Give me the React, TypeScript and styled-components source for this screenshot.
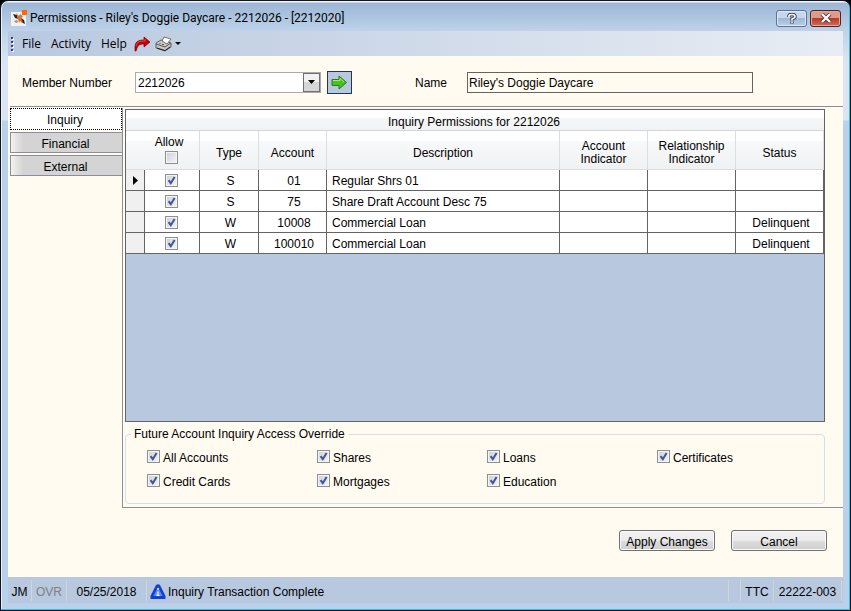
import React, { useState } from "react";
import styled, { createGlobalStyle } from "styled-components";

const sans = '"Liberation Sans", Arial, sans-serif';
const chrome = '"Open Sans", "Noto Sans", sans-serif';
const cream = "#fffbf0";
const slate = "#b8c8df";
const line = "#8c8d99";
const gridLine = "#646464";

const GlobalStyle = createGlobalStyle`
  * { box-sizing: border-box; }
  body { margin: 0; background: #000; }
  button, input, select { font: inherit; color: inherit; margin: 0; }
`;

const Window = styled.div`
  min-height: 100vh;
  display: flex;
  flex-direction: column;
  padding: 0 7px 7px;
  border: 1px solid #14141c;
  border-radius: 8px 8px 0 0;
  background: linear-gradient(#f4f8fc 0 1px, #9cb6d5 2px, #bed3ea 30px, #d9e5f2 60px, #d9e5f2 119px, #b9d1ea 120px);
  box-shadow: inset -1px -1px #2ec4e0, inset 1px 0 #e8f1fa;
  font: 12px/16px ${sans};
  color: #000;
`;

const TitleBar = styled.header`
  display: flex;
  align-items: center;
  height: 30px;
  padding: 4px 2px 0 3px;
  gap: 3px;
`;

const Title = styled.h1`
  flex: 1;
  margin: 0;
  font: 400 12px/16px Roboto, ${chrome};
  white-space: nowrap;
`;

const CaptionButton = styled.button<{ $close?: boolean }>`
  display: flex;
  align-items: center;
  justify-content: center;
  width: 31px;
  height: 17px;
  padding: 0;
  border: 1px solid ${(p) => (p.$close ? "#5a1f1c" : "#5f7390")};
  border-radius: 3px;
  box-shadow: inset 0 0 0 1px ${(p) => (p.$close ? "#e3a79d" : "#dfe9f5")};
  background: ${(p) =>
    p.$close
      ? "linear-gradient(#dc9a8f 0 45%, #b8392b 50%, #cf6f56)"
      : "linear-gradient(#c5d7ec 0 45%, #9fb8d6 50%, #b9cfe8)"};
`;

const MenuBar = styled.nav`
  display: flex;
  align-items: center;
  height: 25px;
  padding-left: 1px;
  background: linear-gradient(90deg, #b8c8df, #e8edf4);
  font: 12px/16px ${chrome};
`;

const MenuButton = styled.button`
  padding: 0 5px;
  border: 0;
  background: none;
  font-size: 12px;
`;

const IconButton = styled.button`
  display: flex;
  align-items: center;
  padding: 0 2px;
  border: 0;
  background: none;
`;

const Body = styled.main`
  flex: 1;
  display: flex;
  flex-direction: column;
  background: ${cream};
`;

const MemberBar = styled.form`
  display: flex;
  align-items: center;
  height: 51px;
  margin-left: 2px;
  padding: 2px 90px 0 12px;
  border-bottom: 1px solid ${line};
`;

const FieldLabel = styled.label<{ $width: number }>`
  width: ${(p) => p.$width}px;
  padding-top: 2px;
  flex: none;
`;

const Combo = styled.span`
  display: grid;
  width: 186px;
  > * { grid-area: 1 / 1; }
`;

const ComboSelect = styled.select`
  appearance: none;
  height: 21px;
  padding: 2px 20px 0 2px;
  border: 1px solid #a9a9b2;
  border-radius: 0;
  background: #fff;
`;

const ComboArrow = styled.span`
  display: flex;
  align-items: center;
  justify-content: center;
  justify-self: end;
  width: 17px;
  height: 19px;
  margin: 1px;
  border: 1px solid #707070;
  background: linear-gradient(#f2f2f2 50%, #d6d6d6 50%);
  pointer-events: none;
`;

const GoButton = styled.button`
  display: flex;
  align-items: center;
  justify-content: center;
  width: 25px;
  height: 23px;
  margin: 0 63px 0 6px;
  padding: 0;
  border: 1px solid #26344f;
  background: ${slate};
`;

const NameInput = styled.input`
  flex: 1;
  min-width: 0;
  height: 21px;
  padding: 2px 1px 0;
  border: 1px solid #646464;
  background: ${cream};
`;

const Content = styled.div`
  flex: 1;
  display: flex;
  padding: 1px 0 0 2px;
`;

const TabList = styled.div`
  width: 112px;
  flex: none;
  display: flex;
  flex-direction: column;
`;

const Tab = styled.button<{ $active?: boolean }>`
  height: ${(p) => (p.$active ? 22 : 21)}px;
  margin-bottom: 2px;
  padding: 2px 2px 0 0;
  border: 1px solid ${line};
  border-width: ${(p) => (p.$active ? "1px" : "1px 0 1px 1px")};
  border-style: ${(p) => (p.$active ? "dotted" : "solid")};
  border-color: ${(p) => (p.$active ? "#000" : line)};
  background: ${(p) => (p.$active ? "#fff" : "linear-gradient(90deg, #f4f2ee, #d4d4d4 12px)")};
`;

const Panel = styled.section`
  flex: 1;
  min-width: 0;
  align-self: flex-start;
  display: flex;
  flex-direction: column;
  height: 400px;
  padding: 1px 18px 3px 2px;
  border: 1px solid ${line};
  border-width: 0 0 1px 1px;
`;

const GridBox = styled.div`
  flex: 1;
  border: 1px solid ${gridLine};
  background: ${slate};
`;

const Table = styled.table`
  width: 100%;
  table-layout: fixed;
  border-collapse: separate;
  border-spacing: 0;
  background: #fff;

  caption {
    height: 21px;
    padding: 4px 2px 0 0;
    line-height: 16px;
    border-bottom: 1px solid #d5d5d8;
    background: linear-gradient(#fff 8px, #f5f6f7 8px, #f1f2f4);
  }
`;

const HeadCell = styled.th<{ $top?: boolean }>`
  height: 39px;
  padding: ${(p) => (p.$top ? 5 : 6)}px 0 0;
  border: 1px solid #dcdde0;
  border-width: 0 1px 1px 0;
  background: linear-gradient(#fff 10px, #f8f9fa 10px, #f0f1f3);
  font-weight: 400;
  line-height: 13px;
  vertical-align: ${(p) => (p.$top ? "top" : "middle")};
  &:first-child { border-right-color: transparent; }
`;

const AllowHead = styled.label`
  display: flex;
  flex-direction: column;
  align-items: center;
  gap: 2px;
  padding-right: 1px;
  span { padding-right: 5px; }
`;

const Cell = styled.td<{ $align?: "left" | "center" }>`
  height: 21px;
  padding: ${(p) => (p.$align === "left" ? "1px 0 0 5px" : "1px 0 0 3px")};
  border: 1px solid ${gridLine};
  border-width: 0 1px 1px 0;
  line-height: 16px;
  text-align: ${(p) => p.$align ?? "center"};
`;

const RowHead = styled(Cell)`
  padding: 1px 0 0 7px;
  background: #f0f0f0;
`;

const TickCell = styled(Cell)`
  padding: 0 1px 0 0;
`;

const Tick = styled.input.attrs({ type: "checkbox" })`
  appearance: none;
  display: block;
  flex: none;
  width: 13px;
  height: 13px;
  border: 1px solid #8e8f8f;
  box-shadow: inset 0 0 0 1px #f4f4f4;
  background: linear-gradient(135deg, #cbcfd5, #f6f6f6);
  &:checked {
    background: url("data:image/svg+xml,%3Csvg xmlns='http://www.w3.org/2000/svg' width='11' height='11'%3E%3Cpath d='M2.6 5.2 4.8 8.2 8.6 2' fill='none' stroke='%2340559a' stroke-width='2'/%3E%3C/svg%3E"),
      linear-gradient(135deg, #cbcfd5, #f6f6f6);
  }
  ${TickCell} & { margin: 0 auto; }
`;

const Override = styled.fieldset`
  height: 78px;
  min-width: 0;
  margin: 4px 0 0;
  padding: 0 0 0 21px;
  border: 1px solid #d5dfe9;
  border-radius: 4px;
  legend {
    margin-left: -16px;
    padding: 0 3px;
    line-height: 16px;
  }
`;

const Options = styled.div`
  display: grid;
  grid-template-columns: repeat(4, 170px);
  row-gap: 8px;
  padding-top: 8px;
`;

const Option = styled.label`
  display: flex;
  gap: 3px;
  line-height: 16px;
`;

const Actions = styled.div`
  display: flex;
  justify-content: flex-end;
  gap: 16px;
  padding: 0 16px 26px;
`;

const ActionButton = styled.button`
  width: 96px;
  height: 21px;
  padding: 2px 0 0;
  border: 1px solid #707070;
  border-radius: 3px;
  box-shadow: inset 0 0 0 1px #fafafa;
  background: linear-gradient(#f2f2f2, #ebebeb 50%, #dddddd 50%, #cfcfcf);
  white-space: nowrap;
`;

const StatusBar = styled.footer`
  display: flex;
  align-items: center;
  height: 26px;
  padding: 0 1px 0 0;
  background: ${slate};
`;

const StatusItem = styled.span<{ $width?: number; $muted?: boolean }>`
  display: flex;
  align-items: center;
  justify-content: center;
  width: ${(p) => (p.$width ? `${p.$width}px` : "auto")};
  height: 21px;
  padding-top: 3px;
  border-right: 1px solid #d4d6d6;
  color: ${(p) => (p.$muted ? "#808080" : "#000")};
`;

const StatusMessage = styled(StatusItem)`
  flex: 1;
  justify-content: flex-start;
  gap: 2px;
  padding-left: 3px;
`;

const AppIcon = () => (
  <svg width="16" height="16" viewBox="0 0 16 16">
    <rect x="0" y="2" width="15" height="14" fill="#f3f2f0" />
    <path d="M2 4 6 5 7 9 4 8ZM10 8 13 10 14 14 10 12Z" fill="#26282c" />
    <path d="M3 11 6 10 7 12 5 13ZM9 4 12 6 11 8 9 7Z" fill="#8b929a" />
    <path d="M5 3 8 6 9 4 10 8 12 13 9 11 8 13 7 9Z" fill="#e96a1a" />
    <rect x="11" y="0" width="5" height="5" fill="#ff6a00" />
  </svg>
);

const Grip = () => (
  <svg width="8" height="16" viewBox="0 0 8 16">
    {[1, 5, 9, 13].map((y) => (
      <g key={y}>
        <rect x="3" y={y + 1} width="2" height="2" fill="#fff" />
        <rect x="2" y={y} width="2" height="2" fill="#27457f" />
      </g>
    ))}
  </svg>
);

const RedArrow = () => (
  <svg width="17" height="16" viewBox="0 0 17 16">
    <path d="M1 15V11C1 6 4 4 10 4V1L16 6 10 11V8C6 8 4 9 3 12L2 15Z" fill="#c4000a" stroke="#7a0004" strokeWidth=".7" />
    <path d="M2 10c1-4 3-5 9-5V3" fill="none" stroke="#f04a4a" />
  </svg>
);

const Printer = () => (
  <svg width="26" height="16" viewBox="0 0 26 16">
    <path d="M1 7 6 4 16 7V11L10 15 1 12Z" fill="#c9c9c9" stroke="#444" strokeWidth=".8" />
    <path d="M7 5 9 1 16 3 12 8Z" fill="#fff" stroke="#555" strokeWidth=".8" />
    <path d="M1 8 10 11 16 7" fill="none" stroke="#555" />
    <path d="M2 12 10 14.500 15 11" fill="none" stroke="#222" />
    <rect x="4" y="7" width="2" height="1" fill="#2c2" />
    <rect x="7" y="8" width="2" height="1" fill="#e22" />
    <path d="M20 6h6l-3 3z" fill="#000" />
  </svg>
);

const DownArrow = () => (
  <svg width="7" height="4" viewBox="0 0 7 4">
    <path d="M0 0h7L3.500 4z" />
  </svg>
);

const GreenArrow = () => (
  <svg width="17" height="15" viewBox="0 0 17 15">
    <path d="M1 4.500H8V1L15.500 7.500 8 14V10.500H1Z" fill="#48c21e" stroke="#2c7d14" />
    <path d="M2 5.500H9V3.500L13 7" fill="none" stroke="#a3ec7c" />
  </svg>
);

const AlertIcon = () => (
  <svg width="16" height="16" viewBox="0 0 16 16">
    <path d="M6 1Q8-.500 10 1L15.500 12V15H.500V12Z" fill="#1240cf" />
    <path d="M8 3 12.500 12H3.500Z" fill="#5f8cf2" />
    <path d="M8 4V6M8 7.500V11M6.500 11.500H9.500" stroke="#fff" strokeWidth="1.200" />
  </svg>
);

const MarkerIcon = styled.svg`
  display: block;
`;

const RowMarker = () => (
  <MarkerIcon width="6" height="9" viewBox="0 0 6 9">
    <path d="M0 0 5 4.500 0 9z" />
  </MarkerIcon>
);

const accounts = [
  { type: "S", account: "01", description: "Regular Shrs 01", status: "" },
  { type: "S", account: "75", description: "Share Draft Account Desc 75", status: "" },
  { type: "W", account: "10008", description: "Commercial Loan", status: "Delinquent" },
  { type: "W", account: "100010", description: "Commercial Loan", status: "Delinquent" },
];

const overrides = ["All Accounts", "Shares", "Loans", "Certificates", "Credit Cards", "Mortgages", "Education"];

export default function App() {
  const [tab, setTab] = useState("Inquiry");

  return (
    <>
      <GlobalStyle />
      <Window>
        <TitleBar>
          <AppIcon />
          <Title>Permissions - Riley's Doggie Daycare - 2212026 - [2212020]</Title>
          <CaptionButton aria-label="Help">
            <svg width="10" height="11" viewBox="0 0 10 11">
              <path d="M2 4V3Q2 1.500 5 1.500T8 3.500Q8 5 5 6V7.500M5 8.500V10.500" fill="none" stroke="#3c4656" strokeWidth="3.600" />
              <path d="M2 4V3Q2 1.500 5 1.500T8 3.500Q8 5 5 6V7.500M5 8.500V10" fill="none" stroke="#fff" strokeWidth="1.600" />
            </svg>
          </CaptionButton>
          <CaptionButton $close aria-label="Close">
            <svg width="12" height="10" viewBox="0 0 12 10">
              <path d="M2 1 10 9M10 1 2 9" stroke="#5c3230" strokeWidth="4" />
              <path d="M2 1 10 9M10 1 2 9" stroke="#fff" strokeWidth="2.400" />
            </svg>
          </CaptionButton>
        </TitleBar>
        <MenuBar>
          <Grip />
          <MenuButton>File</MenuButton>
          <MenuButton>Activity</MenuButton>
          <MenuButton>Help</MenuButton>
          <IconButton aria-label="Forward"><RedArrow /></IconButton>
          <IconButton aria-label="Print"><Printer /></IconButton>
        </MenuBar>
        <Body>
          <MemberBar onSubmit={(e) => e.preventDefault()}>
            <FieldLabel htmlFor="member" $width={113}>Member Number</FieldLabel>
            <Combo>
              <ComboSelect id="member">
                <option>2212026</option>
              </ComboSelect>
              <ComboArrow><DownArrow /></ComboArrow>
            </Combo>
            <GoButton aria-label="Go"><GreenArrow /></GoButton>
            <FieldLabel htmlFor="name" $width={52}>Name</FieldLabel>
            <NameInput id="name" readOnly value="Riley's Doggie Daycare" />
          </MemberBar>
          <Content>
            <TabList role="tablist">
              {["Inquiry", "Financial", "External"].map((name) => (
                <Tab key={name} role="tab" aria-selected={tab === name} $active={tab === name} onClick={() => setTab(name)}>
                  {name}
                </Tab>
              ))}
            </TabList>
            <Panel>
              <GridBox>
                <Table>
                  <caption>Inquiry Permissions for 2212026</caption>
                  <colgroup>
                    <col width="19" />
                    <col width="55" />
                    <col width="59" />
                    <col width="68" />
                    <col />
                    <col width="88" />
                    <col width="88" />
                    <col width="88" />
                  </colgroup>
                  <thead>
                    <tr>
                      <HeadCell />
                      <HeadCell $top><AllowHead><span>Allow</span><Tick /></AllowHead></HeadCell>
                      <HeadCell>Type</HeadCell>
                      <HeadCell>Account</HeadCell>
                      <HeadCell>Description</HeadCell>
                      <HeadCell>Account<br />Indicator</HeadCell>
                      <HeadCell>Relationship<br />Indicator</HeadCell>
                      <HeadCell>Status</HeadCell>
                    </tr>
                  </thead>
                  <tbody>
                    {accounts.map((row, i) => (
                      <tr key={row.account}>
                        <RowHead>{i === 0 && <RowMarker />}</RowHead>
                        <TickCell><Tick defaultChecked aria-label={`Allow ${row.account}`} /></TickCell>
                        <Cell>{row.type}</Cell>
                        <Cell>{row.account}</Cell>
                        <Cell $align="left">{row.description}</Cell>
                        <Cell />
                        <Cell />
                        <Cell>{row.status}</Cell>
                      </tr>
                    ))}
                  </tbody>
                </Table>
              </GridBox>
              <Override>
                <legend>Future Account Inquiry Access Override</legend>
                <Options>
                  {overrides.map((name) => (
                    <Option key={name}><Tick defaultChecked />{name}</Option>
                  ))}
                </Options>
              </Override>
            </Panel>
          </Content>
          <Actions>
            <ActionButton>Apply Changes</ActionButton>
            <ActionButton>Cancel</ActionButton>
          </Actions>
        </Body>
        <StatusBar>
          <StatusItem $width={24}>JM</StatusItem>
          <StatusItem $width={35} $muted>OVR</StatusItem>
          <StatusItem $width={80}>05/25/2018</StatusItem>
          <StatusMessage><AlertIcon />Inquiry Transaction Complete</StatusMessage>
          <StatusItem $width={12} />
          <StatusItem $width={33}>TTC</StatusItem>
          <StatusItem $width={68}>22222-003</StatusItem>
        </StatusBar>
      </Window>
    </>
  );
}
